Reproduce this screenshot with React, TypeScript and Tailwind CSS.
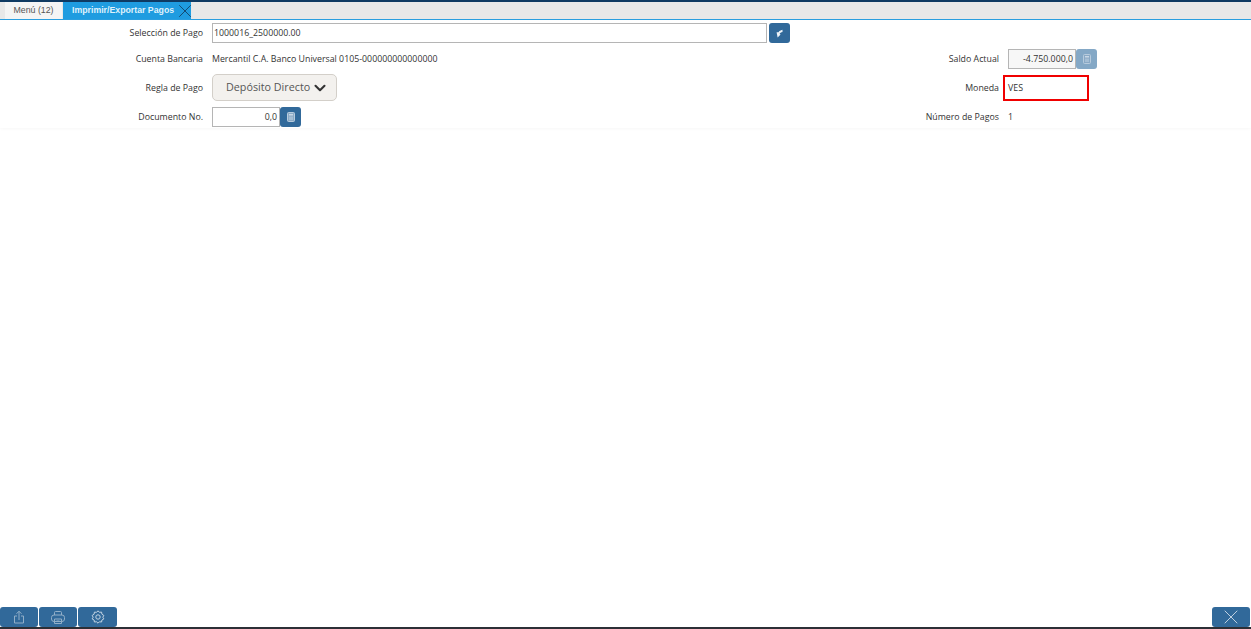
import { ChevronDown, X } from "lucide-react";

const labelClass = "text-right text-[8.8px] leading-none whitespace-nowrap text-[#333]";
const textClass = "text-[8.8px] leading-none whitespace-nowrap text-[#333]";

const CalcIcon = () => (
  <svg width="8" height="10" viewBox="0 0 8 10">
    <rect x="0.5" y="0.5" width="7" height="9" rx="1" fill="#8aa9c5" stroke="#b7cbdd" strokeWidth="1" />
    <rect x="2" y="2" width="4" height="1.5" fill="#c9d8e6" />
    <rect x="2" y="4.5" width="4" height="3.5" fill="#a5bed4" />
  </svg>
);

const CalcButton = ({ disabled }: { disabled?: boolean }) => (
  <div
    className={`flex h-5 w-[21px] items-center justify-center rounded-[3px] ${
      disabled ? "bg-[#84a8c6]" : "bg-[#31699a]"
    }`}
  >
    <CalcIcon />
  </div>
);

const FooterButton = ({ children, width }: { children: React.ReactNode; width: string }) => (
  <div className={`flex h-5 items-center justify-center rounded-[3px] bg-[#31699a] text-[#92afc8] ${width}`}>
    {children}
  </div>
);

export default function App() {
  return (
    <div className="flex h-screen flex-col overflow-hidden bg-white font-['Open_Sans',sans-serif]">
      <div className="h-0.5 bg-[#0f3a62]" />
      <div className="flex h-[18px] items-end gap-px border-b border-[#2b9fe0] bg-[#e8e8e8] pl-[5px] font-['Liberation_Sans',sans-serif]">
        <div className="flex h-[17px] w-[57px] items-center justify-center bg-[#f4f4f4] text-[8.8px] text-[#555]">
          Menú (12)
        </div>
        <div className="flex h-[17px] w-[128px] items-center overflow-hidden bg-[#1f9ce0] pl-[9px]">
          <span className="text-[8.75px] font-bold whitespace-nowrap text-[#dff1fb]">Imprimir/Exportar Pagos</span>
          <X size={22} strokeWidth={0.9} className="shrink-0 text-[#123a5a]" />
        </div>
      </div>

      <div className="grid grid-cols-[203px_696px_82px_1fr] grid-rows-[20px_20px_26px_20px] items-center gap-x-[9px] pt-[3px] pb-px shadow-[0_1px_3px_rgba(0,0,0,0.03)] [row-gap:6px]">
        <div className={labelClass}>Selección de Pago</div>
        <div className="col-span-3 flex gap-0.5">
          <div className={`flex h-5 w-[555px] items-center border border-[#b5b5b5] pl-px ${textClass}`}>
            1000016_2500000.00
          </div>
          <div className="flex h-5 w-[21px] items-center justify-center rounded-[3px] bg-[#31699a]">
            <svg width="7" height="9" viewBox="0 0 7 9">
              <path d="M6.5 0.8 C4.5 1.2 3.2 2 2.6 3.2 L0.6 3.2 L1.6 8.6 L4.6 5.6 L3.6 5 C3.9 4 5 3.2 6.5 3 Z" fill="#eef3f8" />
            </svg>
          </div>
        </div>

        <div className={labelClass}>Cuenta Bancaria</div>
        <div className={textClass}>Mercantil C.A. Banco Universal 0105-000000000000000</div>
        <div className={labelClass}>Saldo Actual</div>
        <div className="flex">
          <div className={`flex h-5 w-[68px] items-center justify-end border border-[#b5b5b5] bg-[#f7f7f7] pr-0.5 ${textClass}`}>
            -4.750.000,0
          </div>
          <CalcButton disabled />
        </div>

        <div className={labelClass}>Regla de Pago</div>
        <div className="-mt-px self-start">
          <div className="flex h-[27px] w-[125px] items-center rounded-[5px] border border-[#d3cfc9] bg-[#f3f1ee] pl-[13px] text-[10.75px] leading-none text-[#555]">
            Depósito Directo
            <ChevronDown size={18} strokeWidth={2.8} className="ml-px shrink-0 text-[#333]" />
          </div>
        </div>
        <div className={labelClass}>Moneda</div>
        <div className={`relative flex items-center self-stretch ${textClass}`}>
          VES
          <div className="absolute top-0 left-[-5px] h-[26px] w-[86px] border-2 border-[#f00000]" />
        </div>

        <div className={labelClass}>Documento No.</div>
        <div className="flex">
          <div className={`flex h-5 w-[68px] items-center justify-end border border-[#b5b5b5] pr-0.5 ${textClass}`}>
            0,0
          </div>
          <CalcButton />
        </div>
        <div className={labelClass}>Número de Pagos</div>
        <div className={textClass}>1</div>
      </div>

      <div className="flex-1" />

      <div className="flex items-end justify-between pr-px">
        <div className="flex gap-px">
          <FooterButton width="w-[38px]">
            <svg width="12" height="14" viewBox="0 0 12 14" fill="none" stroke="currentColor" strokeWidth="1">
              <path d="M4 6 H1.5 V13 H10.5 V6 H8" />
              <path d="M6 10 V1.5 M3.5 3.8 L6 1.2 L8.5 3.8" />
            </svg>
          </FooterButton>
          <FooterButton width="w-[38px]">
            <svg width="14" height="13" viewBox="0 0 14 13" fill="none" stroke="currentColor" strokeWidth="1">
              <path d="M3.5 4 V1.5 Q3.5 0.5 4.5 0.5 H9.5 Q10.5 0.5 10.5 1.5 V4" />
              <rect x="0.5" y="4" width="13" height="6.5" rx="2.5" />
              <path d="M3.5 8 H10.5 V12.5 H3.5 Z M5.5 10 H8.5" />
            </svg>
          </FooterButton>
          <FooterButton width="w-[39px]">
            <svg width="14" height="14" viewBox="0 0 14 14" fill="none" stroke="#c3d4e3" strokeWidth="1">
              <path d="M7 0.8 L8.4 2.3 L10.6 2.1 L10.9 4.2 L12.9 5.5 L11.8 7.2 L12.9 8.9 L10.9 10 L10.6 12 L8.4 11.8 L7 13.2 L5.6 11.8 L3.4 12 L3.1 10 L1.1 8.9 L2.2 7.2 L1.1 5.5 L3.1 4.2 L3.4 2.1 L5.6 2.3 Z" />
              <circle cx="7" cy="7" r="2.2" />
            </svg>
          </FooterButton>
        </div>
        <FooterButton width="w-[38px]">
          <X size={24} strokeWidth={0.9} className="text-[#cfdde9]" />
        </FooterButton>
      </div>
      <div className="h-0.5 bg-[#2c2f36]" />
    </div>
  );
}
